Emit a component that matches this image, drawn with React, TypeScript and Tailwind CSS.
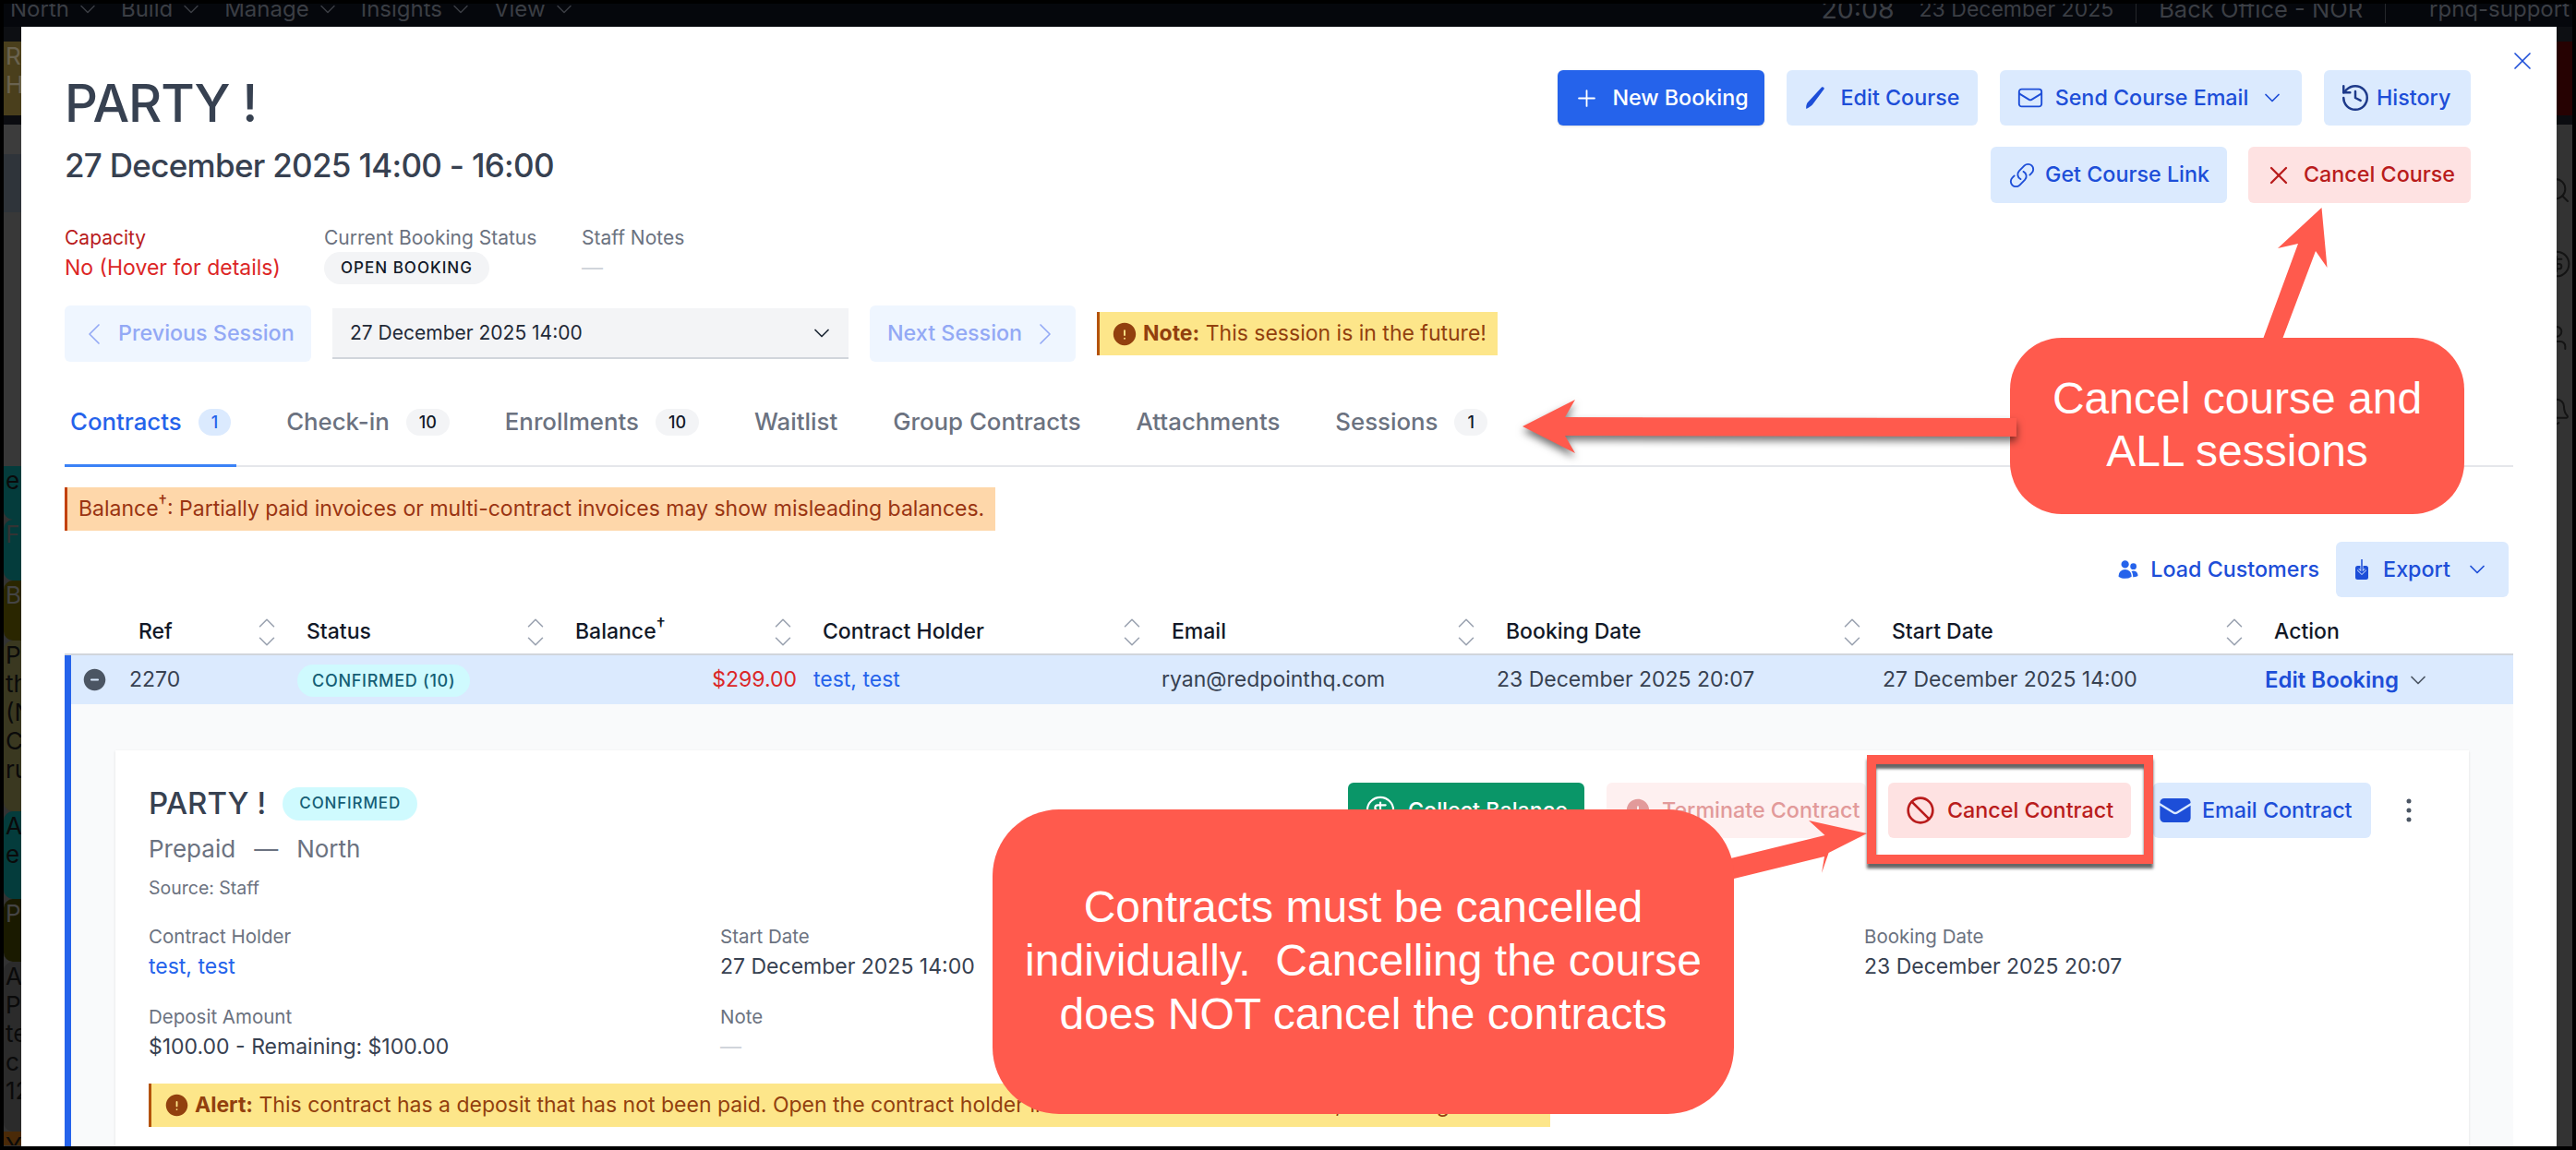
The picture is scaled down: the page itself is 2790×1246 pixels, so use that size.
import React from 'react';
import { Ban, Bell, ChevronDown, ChevronLeft, ChevronRight, ChevronUp, CircleDollarSign, History, Plus, Search, User, X } from 'lucide-react';
import { HiEllipsisVertical, HiEnvelope, HiExclamationCircle, HiMinusCircle, HiOutlineEnvelope, HiOutlineLink, HiUsers } from 'react-icons/hi2';

const PenIcon = () => (
  <svg viewBox="0 0 24 28" className="w-[23px] h-[26px] shrink-0" fill="currentColor">
    <path d="M19 1.500c1.500-.6 3.200.4 3 2L9 21c-1 1.500-2.500 2.800-5.500 4.500L1 27c-.4-3 .2-5 1.200-7z" />
  </svg>
);

const ExportIcon = () => (
  <svg viewBox="0 0 16 24" className="w-[16px] h-[24px] shrink-0" fill="none">
    <rect x="1" y="8" width="14" height="15" rx="2.500" fill="currentColor" />
    <path d="M8 1v15M4 12l4 4 4-4" stroke="#dbeafe" strokeWidth="3" />
    <path d="M8 1v15M4 12l4 4 4-4" stroke="currentColor" strokeWidth="1.500" />
  </svg>
);

const SortIcon = () => (
  <span className="flex flex-col items-center w-[18px] text-gray-400 shrink-0">
    <ChevronUp size={30} strokeWidth={1.250} className="-my-[5px] shrink-0" />
    <ChevronDown size={30} strokeWidth={1.250} className="-my-[5px] shrink-0" />
  </span>
);

const button = 'flex items-center rounded-[6px] font-medium text-[23.3px] whitespace-nowrap';
const blueButton = `${button} justify-center bg-[#dbeafe] text-[#1d4ed8] h-[60px]`;
const label = 'text-[21px] leading-[28px] text-[#6b7280]';
const value = 'text-[23px] leading-[30px] mt-[3px] text-[#374151]';

const Badge = ({ children, active }: { children: React.ReactNode; active?: boolean }) => (
  <span className={`flex items-center justify-center h-[29px] px-[14px] rounded-full text-[18px] font-medium ${active ? 'bg-[#dbeafe] text-[#2563eb]' : 'bg-[#f3f4f6] text-[#111827]'}`}>
    {children}
  </span>
);

const tabs = [
  { label: 'Contracts', count: '1', active: true },
  { label: 'Check-in', count: '10' },
  { label: 'Enrollments', count: '10' },
  { label: 'Waitlist' },
  { label: 'Group Contracts' },
  { label: 'Attachments' },
  { label: 'Sessions', count: '1' },
];

const headers = ['Ref', 'Status', 'Balance', 'Contract Holder', 'Email', 'Booking Date', 'Start Date'];

const Field = ({ title, children }: { title: string; children: React.ReactNode }) => (
  <div>
    <div className="text-[20.5px] leading-[28px] text-[#6b7280]">{title}</div>
    <div className={value}>{children}</div>
  </div>
);

const leftBlocks = [
  { h: 'h-[16px]', c: 'bg-[#0d0f13]', t: [] as string[] },
  { h: 'h-[80px]', c: 'bg-[#4a3f1c] text-[#6a6350]', t: ['R', 'H'] },
  { h: 'h-[10px]', c: 'bg-[#0b0c10]', t: [] },
  { h: 'h-[32px]', c: 'bg-[#3c3c3c]', t: [] },
  { h: 'h-[63px]', c: 'bg-[#2f343a]', t: [] },
  { h: 'h-[275px]', c: 'bg-[#383838]', t: [] },
  { h: 'h-[58px]', c: 'bg-[#043c3c] text-[#0a0a0a] rounded-bl-[10px]', t: ['e'] },
  { h: 'h-[66px]', c: 'bg-[#043c3c] text-[#333] rounded-l-[10px]', t: ['F'] },
  { h: 'h-[65px]', c: 'bg-[#2a2600] text-[#444] rounded-l-[10px]', t: ['B'] },
  { h: 'h-[185px]', c: 'bg-[#3a3820] text-[#0a0a0a] rounded-l-[10px]', t: ['P', 'th', '(N', 'C', 'ru'] },
  { h: 'h-[95px]', c: 'bg-[#043c3c] text-[#0a0a0a] rounded-l-[10px]', t: ['A', 'e'] },
  { h: 'h-[68px]', c: 'bg-[#1a1a00] text-[#444] rounded-l-[10px]', t: ['P'] },
  { h: 'h-[184px]', c: 'bg-[#2b2b2b] text-[#0a0a0a] rounded-l-[10px]', t: ['A', 'P', 'te', 'c', '12'] },
  { h: 'h-[15px]', c: 'bg-[#4a2a08] text-[#0a0a0a]', t: ['Y'] },
];

export default function App() {
  return (
    <div className="relative w-[2790px] h-[1246px] overflow-hidden bg-black [font-family:Inter,sans-serif]">
      {/* dimmed app behind the modal */}
      <div className="absolute inset-[4px] bg-[#333] flex flex-col overflow-hidden">
        <div className="h-[25px] shrink-0 bg-[#05070c] flex items-center justify-between text-[24px] leading-[24px] text-[#3b3e44]">
          <div className="flex items-center -mt-[13px] pl-[7px] gap-[22px]">
            {['North', 'Build', 'Manage', 'Insights', 'View'].map((item) => (
              <span key={item} className="flex items-center gap-[6px]">
                {item}
                <ChevronDown size={28} strokeWidth={1.25} />
              </span>
            ))}
          </div>
          <div className="flex items-center -mt-[13px] pr-[3px]">
            <span className="text-[28.5px]">20:08</span>
            <span className="ml-[27px] text-[23px]">23 December 2025</span>
            <span className="flex items-center h-[30px] ml-[24px] pl-[24px] border-l border-[#25272b] text-[25.5px]">Back Office - NOR</span>
            <span className="flex items-center h-[30px] ml-[24px] pl-[47px] border-l border-[#25272b]">rpnq-support</span>
          </div>
        </div>
        <div className="flex flex-1 justify-between">
          <div className="w-[19px] flex flex-col overflow-hidden">
            {leftBlocks.map((b, i) => (
              <div key={i} className={`${b.h} ${b.c} shrink-0 overflow-hidden pl-[2px] text-[26px] leading-[31px] whitespace-nowrap`}>
                {b.t.map((line) => (
                  <div key={line}>{line}</div>
                ))}
              </div>
            ))}
          </div>
          <div className="w-[17px] flex flex-col">
            <div className="h-[16px] bg-[#0d0f13]" />
            <div className="h-[80px] bg-[#260202]" />
            <div className="h-[10px] bg-[#0b0c10]" />
            <div className="flex flex-col gap-[48px] mt-[55px] text-[#141414]">
              <Search size={32} strokeWidth={1.5} className="-ml-[16px] shrink-0" />
              <CircleDollarSign size={32} strokeWidth={1.5} className="-ml-[16px] shrink-0" />
              <User size={32} strokeWidth={1.5} className="-ml-[16px] shrink-0" />
              <Bell size={32} strokeWidth={1.5} className="-ml-[16px] shrink-0" />
            </div>
          </div>
        </div>
      </div>

      {/* modal */}
      <div className="absolute left-[23px] top-[29px] w-[2746px] h-[1213px] bg-white overflow-hidden px-[47px] pt-[47px]">
        <button className="absolute right-[21px] top-[21px] text-[#1d4ed8]">
          <X size={32} strokeWidth={1.25} />
        </button>

        <div className="flex justify-between h-[144px]">
          <div>
            <h1 className="text-[56px] leading-[56px] font-medium tracking-[-0.02em] text-[#374151] mt-[8px]">PARTY !</h1>
            <h2 className="text-[35px] leading-[40px] font-medium tracking-[-0.02em] text-[#374151] mt-[19px]">27 December 2025 14:00 - 16:00</h2>
          </div>
          <div className="flex flex-col items-end gap-[23px] mr-[46px]">
            <div className="flex gap-[24px]">
              <button className={`${button} justify-center bg-[#2563eb] text-white h-[60px] w-[224px] gap-[13px] shadow-sm`}>
                <Plus size={29} strokeWidth={1.5} />
                New Booking
              </button>
              <button className={`${blueButton} w-[207px] gap-[16px]`}>
                <PenIcon />
                Edit Course
              </button>
              <button className={`${blueButton} w-[327px] gap-[12px]`}>
                <HiOutlineEnvelope size={30} />
                Send Course Email
                <ChevronDown size={28} strokeWidth={1.5} />
              </button>
              <button className={`${button} bg-[#dbeafe] text-[#1d4ed8] h-[60px] w-[159px] pl-[17px] gap-[6px]`}>
                <History size={34} strokeWidth={1.75} className="text-[#1e3a8a]" />
                History
              </button>
            </div>
            <div className="flex gap-[23px]">
              <button className={`${blueButton} !h-[61px] w-[256px] gap-[10px]`}>
                <HiOutlineLink size={30} />
                Get Course Link
              </button>
              <button className={`${button} justify-center h-[61px] bg-[#fee2e2] text-[#b91c1c] w-[241px] gap-[11px]`}>
                <X size={32} strokeWidth={1.75} />
                Cancel Course
              </button>
            </div>
          </div>
        </div>

        <div className="flex mt-[24px] h-[64px]">
          <div className="w-[281px]">
            <div className="text-[21px] leading-[28px] text-[#b91c1c]">Capacity</div>
            <div className="text-[23px] leading-[30px] mt-[3px] text-[#dc2626]">No (Hover for details)</div>
          </div>
          <div className="w-[279px]">
            <div className={label}>Current Booking Status</div>
            <span className="mt-[1px] inline-flex items-center h-[35px] px-[18px] rounded-full bg-[#f3f4f6] text-[#111827] text-[17px] font-medium tracking-[0.06em]">OPEN BOOKING</span>
          </div>
          <div>
            <div className={label}>Staff Notes</div>
            <div className="text-[23px] leading-[30px] mt-[3px] text-[#d1d5db]">—</div>
          </div>
        </div>

        <div className="flex items-center gap-[23px] mt-[23px] h-[61px]">
          <button className={`${button} h-[61px] w-[267px] bg-[#eff6ff] text-[#93a9f5] pl-[12px] gap-[6px]`}>
            <ChevronLeft size={40} strokeWidth={1} />
            Previous Session
          </button>
          <div className="flex items-center justify-between w-[559px] h-[55px] bg-[#f3f4f6] border-b-2 border-[#d1d5db] pl-[19px] pr-[15px] text-[21px] text-[#1f2937]">
            27 December 2025 14:00
            <ChevronDown size={28} strokeWidth={1.5} />
          </div>
          <button className={`${button} h-[61px] w-[223px] bg-[#eff6ff] text-[#93a9f5] pl-[19px] gap-[5px]`}>
            Next Session
            <ChevronRight size={40} strokeWidth={1} />
          </button>
          <div className="flex items-center h-[47px] w-[434px] bg-[#fde68a] border-l-[3px] border-[#b45309] text-[#92400e] text-[23px] pl-[12px] gap-[5px] whitespace-nowrap">
            <HiExclamationCircle size={30} className="shrink-0" />
            <span><b className="font-bold">Note:</b> This session is in the future!</span>
          </div>
        </div>

        <div className="flex gap-[48px] mt-[44px] h-[70px] border-b-2 border-[#e5e7eb]">
          {tabs.map((tab) => (
            <div key={tab.label} className={`flex items-start px-[6px] h-[70px] ${tab.active ? 'border-b-[3px] border-[#3b82f6]' : ''}`}>
              <div className="flex items-center h-[43px] gap-[18px]">
                <span className={`text-[25.8px] font-medium ${tab.active ? 'text-[#2563eb]' : 'text-[#6b7280]'}`}>{tab.label}</span>
                {tab.count && <Badge active={tab.active}>{tab.count}</Badge>}
              </div>
            </div>
          ))}
        </div>

        <div className="mt-[22px] flex items-center w-[1008px] h-[47px] bg-[#fed7aa] border-l-[3px] border-[#c2410c] pl-[12px] text-[23px] text-[#9a3412] whitespace-nowrap">
          <span>Balance<sup className="text-[19px]">†</sup>: Partially paid invoices or multi-contract invoices may show misleading balances.</span>
        </div>

        <div className="flex justify-end items-center mt-[12px] pr-[5px] gap-[18px]">
          <button className={`${button} gap-[12px] text-[#1d4ed8]`}>
            <HiUsers size={24} className="text-[#2563eb]" />
            Load Customers
          </button>
          <button className={`${blueButton} w-[187px] gap-[15px]`}>
            <ExportIcon />
            Export
            <ChevronDown size={28} strokeWidth={1.5} />
          </button>
        </div>

        {/* contracts table */}
        <div className="mt-[14px] grid grid-cols-[60px_182px_291px_268px_378px_362px_418px_414px_279px] h-[49px] items-center border-b-2 border-[#d1d5db] text-[23px] font-medium text-[#111827]">
          <div />
          {headers.map((h) => (
            <div key={h} className="flex items-center justify-between pl-[20px] pr-[14px]">
              <span>
                {h}
                {h === 'Balance' && <sup className="text-[19px]">†</sup>}
              </span>
              <SortIcon />
            </div>
          ))}
          <div className="pl-[20px]">Action</div>
        </div>

        <div className="border-l-[7px] border-[#2563eb] h-[600px] bg-[#f9fafb]">
          <div className="grid grid-cols-[53px_182px_291px_268px_378px_362px_418px_414px_279px] h-[53px] items-center bg-[#dbeafe] text-[23px] text-[#374151]">
            <div className="pl-[11px]">
              <HiMinusCircle size={29} className="text-[#4b5563]" />
            </div>
            <div className="pl-[10px]">2270</div>
            <div className="pl-[10px]">
              <span className="inline-flex items-center h-[35px] px-[16px] rounded-full bg-[#cffafe] text-[#155e75] text-[18px] font-medium tracking-[0.04em]">CONFIRMED (10)</span>
            </div>
            <div className="text-right pr-[8px] text-[#dc2626]">$299.00</div>
            <div className="pl-[10px] text-[#2563eb]">test, test</div>
            <div className="pl-[9px]">ryan@redpointhq.com</div>
            <div className="pl-[10px]">23 December 2025 20:07</div>
            <div className="pl-[10px]">27 December 2025 14:00</div>
            <div className="flex items-center gap-[7px] pl-[10px] text-[24px] text-[#1d4ed8] font-semibold">
              Edit Booking
              <ChevronDown size={28} strokeWidth={1.5} className="text-[#4b5563]" />
            </div>
          </div>

          <div className="px-[48px] pt-[50px]">
            <div className="bg-white shadow-sm pl-[36px] pt-[35px] h-[500px]">
              <div className="flex justify-between">
                <div className="mt-[5px]">
                  <div className="flex items-center h-[36px] gap-[18px]">
                    <span className="text-[33px] font-medium text-[#374151]">PARTY !</span>
                    <span className="inline-flex items-center h-[36px] px-[18px] rounded-full bg-[#cffafe] text-[#155e75] text-[17px] font-medium tracking-[0.05em]">CONFIRMED</span>
                  </div>
                  <div className="mt-[15px] flex items-center gap-[20px] text-[26px] leading-[32px] text-[#6b7280]">
                    <span>Prepaid</span>
                    <span>—</span>
                    <span>North</span>
                  </div>
                  <div className="mt-[12px] text-[19.5px] leading-[28px] text-[#6b7280]">Source: Staff</div>
                </div>
                <div className="flex items-start mr-[57px] gap-[24px]">
                  <button className={`${button} justify-center h-[60px] w-[256px] bg-[#0a9668] text-white gap-[13px]`}>
                    <CircleDollarSign size={34} strokeWidth={1.5} />
                    Collect Balance
                  </button>
                  <button className={`${button} h-[60px] w-[281px] bg-[#fef0f0] text-[#e29a9a] gap-[11px] pl-[19px]`}>
                    <HiExclamationCircle size={30} className="shrink-0" />
                    Terminate Contract
                  </button>
                  <button className={`${button} justify-center h-[60px] w-[263px] bg-[#fee2e2] text-[#b91c1c] gap-[13px]`}>
                    <Ban size={32} />
                    Cancel Contract
                  </button>
                  <button className={`${button} bg-[#dbeafe] text-[#1d4ed8] h-[60px] w-[236px] pl-[5px] gap-[10px]`}>
                    <HiEnvelope size={38} />
                    Email Contract
                  </button>
                  <button className="flex items-center justify-center h-[60px] w-[17px] text-[#4b5563] ml-[8px]">
                    <HiEllipsisVertical size={40} className="shrink-0" />
                  </button>
                </div>
              </div>

              <div className="mt-[25px] grid grid-cols-[619px_620px_619px_1fr] gap-y-[26px]">
                <Field title="Contract Holder"><span className="text-[#2563eb]">test, test</span></Field>
                <Field title="Start Date">27 December 2025 14:00</Field>
                <div />
                <Field title="Booking Date">23 December 2025 20:07</Field>
                <Field title="Deposit Amount">$100.00 - Remaining: $100.00</Field>
                <Field title="Note"><span className="text-[#d1d5db]">—</span></Field>
              </div>

              <div className="mt-[25px] flex items-center w-[1518px] h-[47px] bg-[#fde68a] border-l-[3px] border-[#b45309] text-[#92400e] text-[23px] pl-[13px] gap-[5px] whitespace-nowrap overflow-hidden">
                <HiExclamationCircle size={29} className="shrink-0" />
                <span><b className="font-bold">Alert:</b> This contract has a deposit that has not been paid. Open the contract holder in the contact center to collect; see Billing details.</span>
              </div>
            </div>
          </div>
        </div>
      </div>

      {/* annotations */}
      <svg className="absolute left-0 top-0 w-[2790px] h-[1246px] pointer-events-none" viewBox="0 0 2790 1246">
        <polygon fill="#ff5a4d" points="2514.5,225 2520.5,290 2508,272 2471,370 2450,370 2489,264 2467,269" />
        <polygon fill="#ff5a4d" points="1959,889 2022,903 1980.6,924 1973,946 1976,928 1878,952 1874.5,930 1976.5,905" />
      </svg>

      <div className="absolute left-[2177px] top-[366px] w-[492px] h-[191px] rounded-[56px] bg-[#ff5a4d] flex items-center justify-center pb-[3px] text-center text-white text-[48px] leading-[57px] [font-family:'Liberation_Sans',sans-serif]">
        Cancel course and<br />ALL sessions
      </div>

      <svg className="absolute left-0 top-0 w-[2790px] h-[1246px] pointer-events-none drop-shadow-[0_5px_4px_rgba(0,0,0,0.55)]" viewBox="0 0 2790 1246">
        <polygon fill="#ff5a4d" points="1649,462 1706,433 1695,452 2184,453 2184,473 1695,472 1706,491" />
      </svg>

      <div className="absolute left-[2022px] top-[818px] w-[310px] h-[118px] border-[10px] border-[#ff5a4d] shadow-[0_5px_3px_rgba(0,0,0,0.6),inset_0_5px_3px_rgba(0,0,0,0.6)]" />

      <div className="absolute left-[1075px] top-[877px] w-[803px] h-[330px] rounded-[72px] bg-[#ff5a4d] flex items-center justify-center pb-[3px] text-center text-white text-[48px] leading-[58px] whitespace-pre [font-family:'Liberation_Sans',sans-serif]">
        {'Contracts must be cancelled\nindividually.  Cancelling the course\ndoes NOT cancel the contracts'}
      </div>
    </div>
  );
}
